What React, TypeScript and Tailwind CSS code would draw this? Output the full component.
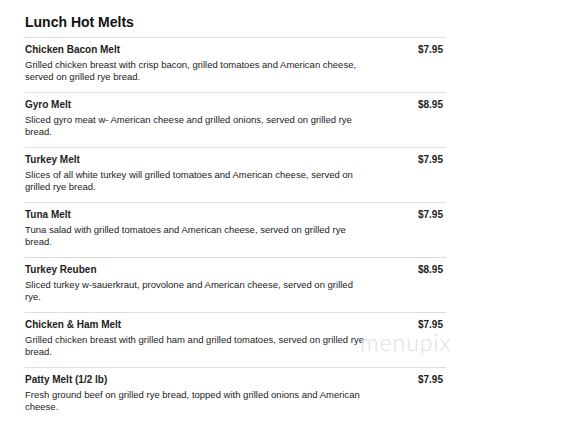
import React from 'react';

interface MenuItem {
    name: string;
    price: string;
    description: string;
}

const items: MenuItem[] = [
    {
        name: 'Chicken Bacon Melt',
        price: '$7.95',
        description: 'Grilled chicken breast with crisp bacon, grilled tomatoes and American cheese, served on grilled rye bread.',
    },
    {
        name: 'Gyro Melt',
        price: '$8.95',
        description: 'Sliced gyro meat w- American cheese and grilled onions, served on grilled rye bread.',
    },
    {
        name: 'Turkey Melt',
        price: '$7.95',
        description: 'Slices of all white turkey will grilled tomatoes and American cheese, served on grilled rye bread.',
    },
    {
        name: 'Tuna Melt',
        price: '$7.95',
        description: 'Tuna salad with grilled tomatoes and American cheese, served on grilled rye bread.',
    },
    {
        name: 'Turkey Reuben',
        price: '$8.95',
        description: 'Sliced turkey w-sauerkraut, provolone and American cheese, served on grilled rye.',
    },
    {
        name: 'Chicken & Ham Melt',
        price: '$7.95',
        description: 'Grilled chicken breast with grilled ham and grilled tomatoes, served on grilled rye bread.',
    },
    {
        name: 'Patty Melt (1/2 lb)',
        price: '$7.95',
        description: 'Fresh ground beef on grilled rye bread, topped with grilled onions and American cheese.',
    },
];

const App: React.FC = () => {
    return (
        <div className="relative w-[573px] h-[425px] overflow-hidden bg-white font-['Liberation_Sans',Arial,sans-serif] text-[#222]">
            <div className="w-[421px] ml-[25px] pt-[13px]">
                <h1 className="text-[14px] font-bold leading-[18px] text-[#111] pb-[6px] border-b border-[#dddddd]">
                    Lunch Hot Melts
                </h1>

                {items.map((item) => (
                    <div key={item.name} className="border-b border-[#dddddd] last:border-b-0 pt-[5px] pb-[9px]">
                        <div className="flex items-start justify-between">
                            <h3 className="text-[10px] font-bold leading-[13px]">{item.name}</h3>
                            <span className="text-[10px] font-bold leading-[13px] pr-[3px]">{item.price}</span>
                        </div>
                        <p className="mt-[3px] w-[341px] text-[9.5px] leading-[12px]">{item.description}</p>
                    </div>
                ))}
            </div>

            {/* watermark */}
            <div className="absolute left-[360px] top-[331px] text-[23px] font-light leading-none tracking-[1px] text-[#dedede] font-['Lato',sans-serif] pointer-events-none">
                menupix
            </div>
        </div>
    );
};

export default App;
